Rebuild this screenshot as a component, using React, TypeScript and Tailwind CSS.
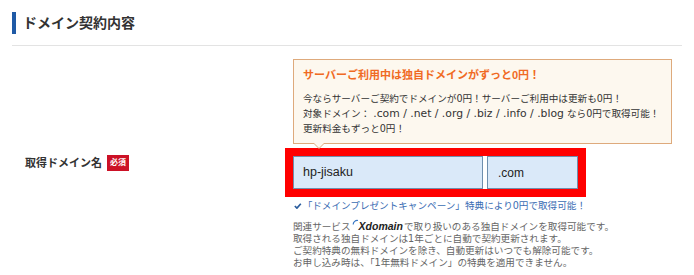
const FONT = "font-['Liberation_Sans','Noto_Sans_CJK_JP',sans-serif]";
const BODY = "font-['DejaVu_Sans','Noto_Sans_CJK_JP',sans-serif]";

function XdomainLogo() {
  return (
    <span className="inline-flex items-baseline mx-[1px]">
      <svg width="7" height="9" viewBox="0 0 7 9" className="self-start -mt-[1px]">
        <path d="M6 1.5 A4 4 0 0 0 1.2 5.5" stroke="#3a78c4" strokeWidth="1.2" fill="none" />
      </svg>
      <span className="font-['Liberation_Sans'] font-bold italic text-[#222] text-[10.5px]">Xdomain</span>
    </span>
  );
}

function CheckMark() {
  return (
    <svg width="11" height="10" viewBox="0 0 11 10">
      <path d="M1.2 5 L4.2 8 L9.8 1.8" stroke="#2c5e9e" strokeWidth="2.4" fill="none" strokeLinejoin="round" />
    </svg>
  );
}

export default function App() {
  return (
    <div className={`w-[694px] h-[275px] bg-white overflow-hidden ${FONT}`}>
      {/* Section header */}
      <div className="px-[12px] pt-[12px]">
        <div className="flex items-center h-[22px]">
          <div className="w-[4px] h-[22px] bg-[#1f5aa6]" />
          <h2 className="ml-[7px] text-[14px] font-bold text-[#333]">ドメイン契約内容</h2>
        </div>
        <div className="mt-[11px] h-[1px] bg-[#e3e3e3]" />
      </div>

      {/* Form row */}
      <div className="flex mt-[13px]">
        <div className="w-[285px] shrink-0 pl-[25px] pt-[96px]">
          <div className="flex items-center">
            <span className="text-[11px] font-bold text-[#333]">取得ドメイン名</span>
            <span className="ml-[5px] px-[3px] h-[16px] flex items-center bg-[#cc1126] text-white text-[8px] font-bold">必須</span>
          </div>
        </div>

        <div className="w-[301px] shrink-0">
          {/* Campaign balloon */}
          <div className="relative ml-[8px] w-[379px] border border-[#deaa7c] bg-[#fdf8ef] pl-[9px] pt-[8px] pb-[7px]">
            <p className="text-[11px] leading-[15px] font-bold text-[#f06a23]">サーバーご利用中は独自ドメインがずっと0円！</p>
            <div className={`mt-[8px] text-[9.6px] leading-[15px] text-[#333] ${BODY}`}>
              <p>今ならサーバーご契約でドメインが0円！サーバーご利用中は更新も0円！</p>
              <p>
                対象ドメイン： <span className="text-[10.8px]">.com / .net / .org / .biz / .info / .blog</span> なら0円で取得可能！
              </p>
              <p>更新料金もずっと0円！</p>
            </div>
            <div className="absolute left-[19px] -bottom-[6px] w-0 h-0 border-l-[6px] border-r-[6px] border-t-[6px] border-l-transparent border-r-transparent border-t-[#deaa7c]" />
            <div className="absolute left-[20px] -bottom-[5px] w-0 h-0 border-l-[5px] border-r-[5px] border-t-[5px] border-l-transparent border-r-transparent border-t-[#fdf8ef]" />
          </div>

          {/* Domain inputs */}
          <div className="mt-[4px] flex gap-[4px] border-[8px] border-[#ff0000]">
            <div className="w-[190px] h-[33px] flex items-center pl-[9px] bg-[#dae9f9] border border-[#6f8fae] text-[12.5px] text-[#222]">
              hp-jisaku
            </div>
            <div className="flex-1 h-[33px] flex items-center pl-[10px] bg-[#dae9f9] border border-[#6f8fae] text-[12px] text-[#222]">
              .com
            </div>
          </div>

          {/* Campaign note */}
          <div className={`mt-[2px] ml-[9px] flex items-center h-[14px] text-[9.6px] text-[#3a6db3] whitespace-nowrap ${BODY}`}>
            <CheckMark />
            <span className="ml-[1px]">「ドメインプレゼントキャンペーン」特典により0円で取得可能！</span>
          </div>

          <div className={`mt-[7px] ml-[8px] text-[9.6px] leading-[12px] text-[#666] whitespace-nowrap ${BODY}`}>
            <p className="flex items-baseline">関連サービス<XdomainLogo />で取り扱いのある独自ドメインを取得可能です。</p>
            <p>取得される独自ドメインは1年ごとに自動で契約更新されます。</p>
            <p>ご契約特典の無料ドメインを除き、自動更新はいつでも解除可能です。</p>
            <p>お申し込み時は、「1年無料ドメイン」の特典を適用できません。</p>
          </div>
        </div>
      </div>
    </div>
  );
}
